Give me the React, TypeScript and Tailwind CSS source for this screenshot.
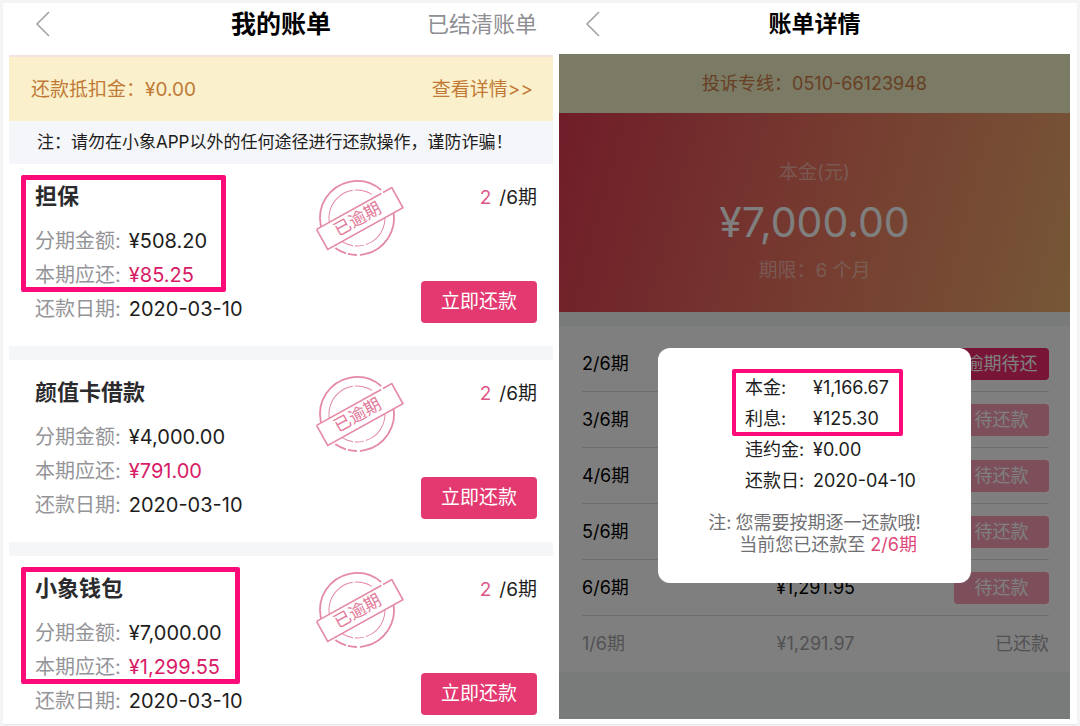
const bills = [
  {
    name: "担保",
    total: "¥508.20",
    due: "¥85.25",
    date: "2020-03-10",
    mark: "w-[205px]",
  },
  {
    name: "颜值卡借款",
    total: "¥4,000.00",
    due: "¥791.00",
    date: "2020-03-10",
    mark: "",
  },
  {
    name: "小象钱包",
    total: "¥7,000.00",
    due: "¥1,299.55",
    date: "2020-03-10",
    mark: "w-[219px]",
  },
];

const periods = [
  { label: "2/6期", amount: "", status: "overdue" },
  { label: "3/6期", amount: "", status: "pending" },
  { label: "4/6期", amount: "", status: "pending" },
  { label: "5/6期", amount: "", status: "pending" },
  { label: "6/6期", amount: "¥1,291.95", status: "pending" },
  { label: "1/6期", amount: "¥1,291.97", status: "paid" },
];

const detail = [
  { label: "本金:", value: "¥1,166.67" },
  { label: "利息:", value: "¥125.30" },
  { label: "违约金:", value: "¥0.00" },
  { label: "还款日:", value: "2020-04-10" },
];

function BackButton() {
  return (
    <button type="button" aria-label="返回" className="ml-2.5 justify-self-start">
      <svg width="15" height="26" viewBox="0 0 15 26" fill="none">
        <path d="M14 1 2 13l12 12" stroke="#a3a3a8" strokeWidth="1.6" />
      </svg>
    </button>
  );
}

function Stamp() {
  return (
    <svg width="90" height="80" viewBox="0 0 90 80" fill="none" className="shrink-0">
      <g stroke="#e48aa6">
        <circle
          cx="41"
          cy="42"
          r="37"
          strokeWidth="1.8"
          strokeDasharray="92 3 12 2 70 3 9 2 12 3 56 1"
          transform="rotate(168 41 42)"
        />
        <circle
          cx="41"
          cy="42"
          r="28"
          strokeWidth="1"
          strokeDasharray="30 2 18 3 60 2 9 2"
          transform="rotate(200 41 42)"
        />
        <rect
          x="1"
          y="31"
          width="86"
          height="23"
          fill="#fff"
          strokeWidth="1.6"
          strokeDasharray="74 2 142 0"
          transform="rotate(-29 44 43)"
        />
      </g>
      <text
        x="41"
        y="49"
        textAnchor="middle"
        fontSize="17"
        fill="#e27798"
        transform="rotate(-29 41 42)"
      >
        已逾期
      </text>
    </svg>
  );
}

function BillCard({ bill }: { bill: (typeof bills)[number] }) {
  return (
    <article className="relative grid grid-cols-[56%_1fr] pt-3 pr-4 pb-5 pl-[26px] last:pb-1.5">
      <div>
        <h2 className="text-[22px] leading-10 font-bold text-[#2b2b2e]">
          {bill.name}
        </h2>
        <dl className="mt-2 grid grid-cols-[auto_1fr] gap-x-2 text-xl leading-[34px] text-[#1d1d20]">
          <dt className="text-[#949498]">分期金额:</dt>
          <dd>{bill.total}</dd>
          <dt className="text-[#949498]">本期应还:</dt>
          <dd className="text-[#d81b66]">{bill.due}</dd>
          <dt className="text-[#949498]">还款日期:</dt>
          <dd>{bill.date}</dd>
        </dl>
      </div>
      <div className="flex justify-between pb-[3px]">
        <Stamp />
        <div className="flex flex-col items-end justify-between">
          <p className="text-[19px] leading-[44px] text-[#1d1d20]">
            <span className="mr-2 text-[#dd5584]">2</span>/6期
          </p>
          <button
            type="button"
            className="h-[42px] rounded bg-[#e33870] px-5 text-[19px] text-white"
          >
            立即还款
          </button>
        </div>
      </div>
      {bill.mark && (
        <div
          className={`absolute top-[11px] left-3 h-[117px] rounded-xs border-5 border-[#fb0a78] ${bill.mark}`}
        />
      )}
    </article>
  );
}

function BillList() {
  return (
    <section>
      <header className="grid h-[52px] grid-cols-[1fr_auto_1fr] items-center px-4 pb-2.5">
        <BackButton />
        <h1 className="text-[25px] leading-8 font-bold text-black">我的账单</h1>
        <a href="#settled" className="justify-self-end text-[22px] leading-8 text-[#8e8e93]">
          已结清账单
        </a>
      </header>
      <div className="flex h-[66px] items-center justify-between border-t-2 border-[#f7e0e0] bg-[#faf0cc] pt-0.5 pr-5 pl-[22px] text-[19px] text-[#c07a35]">
        <p>还款抵扣金：¥0.00</p>
        <a href="#deduction">查看详情&gt;&gt;</a>
      </div>
      <p className="bg-[#f5f6f9] pl-7 text-[17px] leading-[43px] whitespace-nowrap text-[#1d1d20]">
        注：请勿在小象APP以外的任何途径进行还款操作，谨防诈骗！
      </p>
      <div className="divide-y-14 divide-[#f5f6f8]">
        {bills.map((b) => (
          <BillCard key={b.name} bill={b} />
        ))}
      </div>
    </section>
  );
}

function PeriodStatus({ status }: { status: string }) {
  if (status === "paid") {
    return <span className="justify-self-end">已还款</span>;
  }
  if (status === "overdue") {
    return (
      <button
        type="button"
        className="h-8 w-[95px] justify-self-end rounded-sm bg-[#f02a6c] text-white"
      >
        逾期待还
      </button>
    );
  }
  return (
    <button
      type="button"
      className="h-8 w-[95px] justify-self-end rounded-sm bg-[#f99fb5] text-white"
    >
      待还款
    </button>
  );
}

function DetailDialog() {
  return (
    <div
      role="dialog"
      aria-label="还款明细"
      className="relative w-[313px] rounded-xl bg-white pt-6 pb-[27px]"
    >
      <dl className="grid grid-cols-[68px_1fr] pl-[87px] text-lg leading-[31px] text-[#1d1d20]">
        {detail.map((d) => (
          <div key={d.label} className="contents">
            <dt>{d.label}</dt>
            <dd>{d.value}</dd>
          </div>
        ))}
      </dl>
      <div className="mt-4 flex justify-center gap-1 text-lg leading-[22px] text-[#707074]">
        <span>注:</span>
        <p className="text-center">
          您需要按期逐一还款哦!
          <br />
          当前您已还款至 <span className="text-[#e0497c]">2/6期</span>
        </p>
      </div>
      <div className="absolute top-[21px] left-[74px] h-[67px] w-[171px] rounded-xs border-4 border-[#fb0a78]" />
    </div>
  );
}

function BillDetail() {
  return (
    <section className="flex flex-col pb-[5px]">
      <header className="grid h-[51px] grid-cols-[1fr_auto_1fr] items-center px-4 pb-[9px]">
        <BackButton />
        <h1 className="text-[23px] leading-8 font-bold text-black">账单详情</h1>
      </header>
      <div className="relative flex-1 bg-[#f3f4f5]">
        <p className="bg-[#f4f4ca] text-center text-lg leading-[59px] text-[#d08048]">
          投诉专线：0510-66123948
        </p>
        <div className="h-[199px] bg-linear-[105deg] from-[#e03a52] via-[#ec7660] to-[#ecae6e] pt-[45px] text-center text-[19px] text-white/45">
          <p className="leading-[30px]">本金(元)</p>
          <p className="text-[41px] leading-[68px] text-white">¥7,000.00</p>
          <p className="leading-[30px]">期限：6 个月</p>
        </div>
        <ul className="mt-3.5 bg-white pt-2.5 pr-[21px] pl-[23px] text-lg">
          {periods.map((p) => (
            <li
              key={p.label}
              className={`grid h-14 grid-cols-3 items-center border-b border-[#dcdcdc] last:border-transparent ${
                p.status === "paid" ? "text-[#a5a5a8]" : "text-black"
              }`}
            >
              <span>{p.label}</span>
              <span className="justify-self-center">{p.amount}</span>
              <PeriodStatus status={p.status} />
            </li>
          ))}
        </ul>
        <div className="absolute inset-0 flex items-start justify-center bg-black/50 pt-[294px]">
          <DetailDialog />
        </div>
      </div>
    </section>
  );
}

export default function App() {
  return (
    <div className="bg-[#f3f4f6] p-[3px] font-['Inter','Noto_Sans_CJK_SC',sans-serif]">
      <main className="grid grid-cols-[544fr_511fr] gap-1.5 border-b border-[#e3e5e8] bg-white pr-[7px] pl-1.5">
        <BillList />
        <BillDetail />
      </main>
    </div>
  );
}
